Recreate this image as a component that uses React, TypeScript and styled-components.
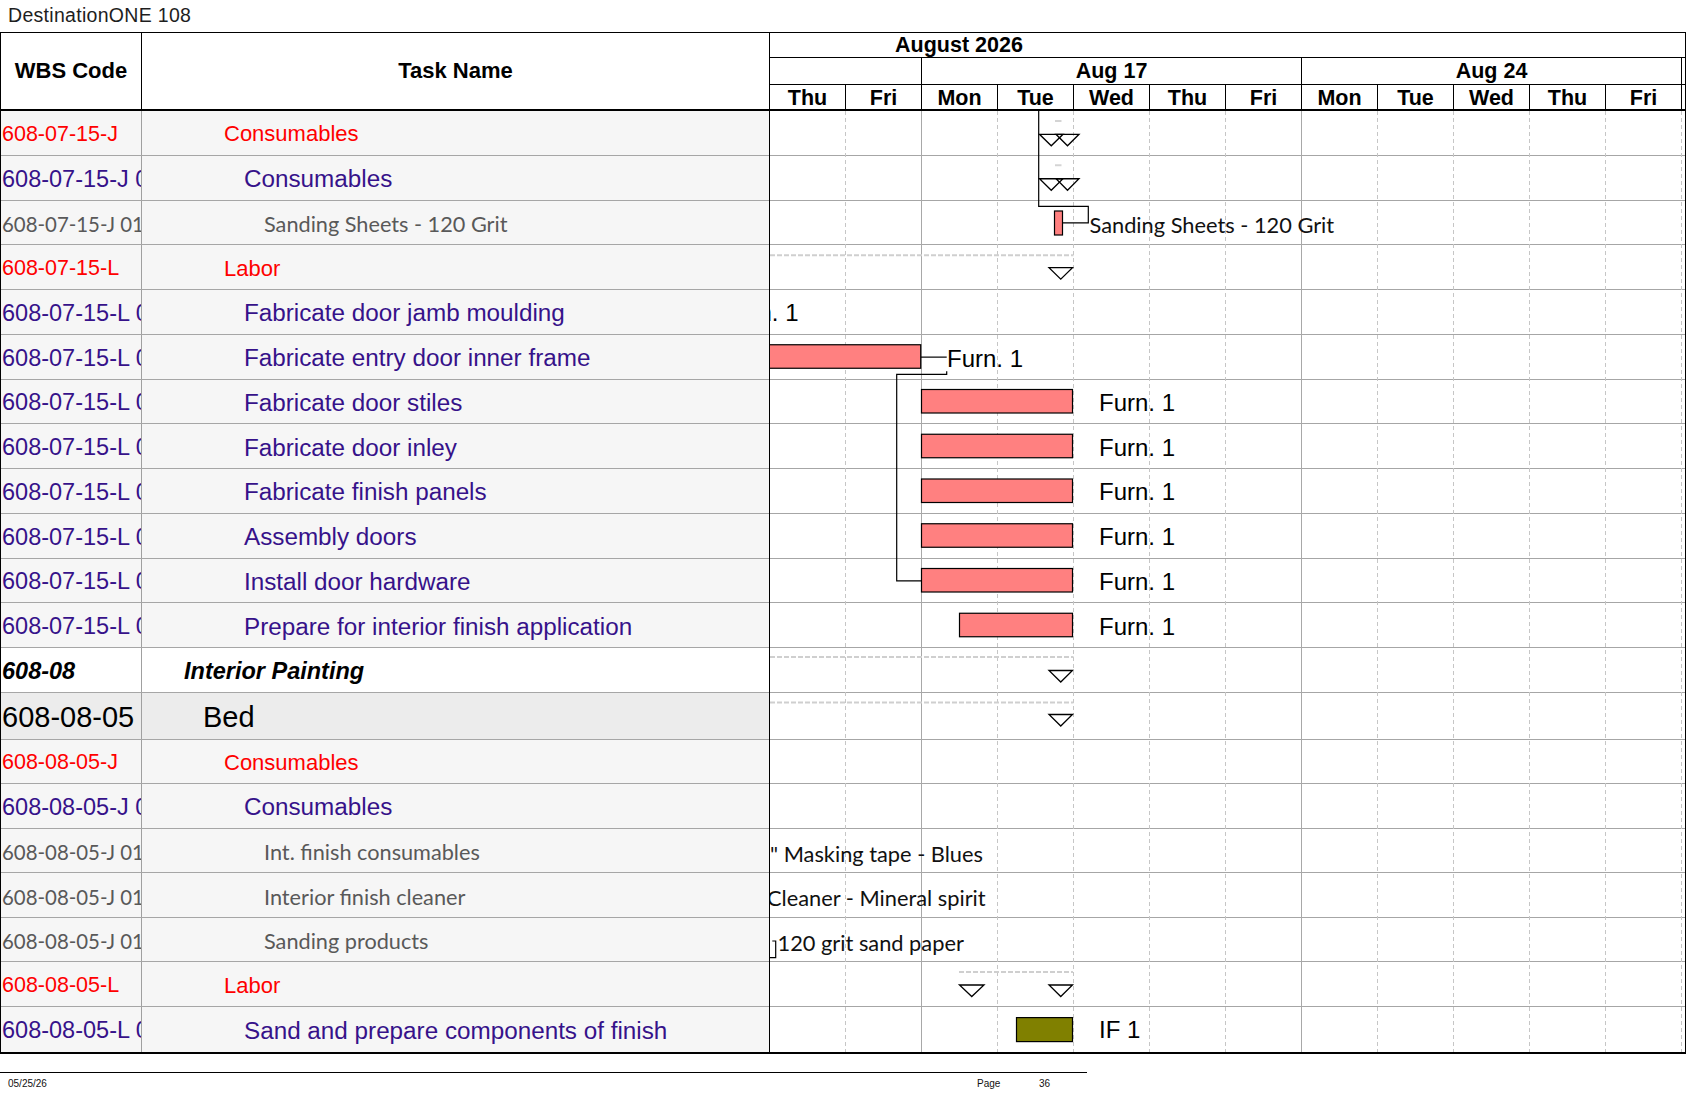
import styled, { createGlobalStyle } from "styled-components";

type Kind = "red" | "purple" | "gray" | "phase" | "bed";

interface Task {
  wbs: string;
  name: string;
  kind: Kind;
  height: number;
}

const tasks: Task[] = [
  { wbs: "608-07-15-J", name: "Consumables", kind: "red", height: 44.75 },
  { wbs: "608-07-15-J 01", name: "Consumables", kind: "purple", height: 44.75 },
  { wbs: "608-07-15-J 01.01", name: "Sanding Sheets - 120 Grit", kind: "gray", height: 44.75 },
  { wbs: "608-07-15-L", name: "Labor", kind: "red", height: 44.75 },
  { wbs: "608-07-15-L 01", name: "Fabricate door jamb moulding", kind: "purple", height: 44.75 },
  { wbs: "608-07-15-L 02", name: "Fabricate entry door inner frame", kind: "purple", height: 44.75 },
  { wbs: "608-07-15-L 03", name: "Fabricate door stiles", kind: "purple", height: 44.75 },
  { wbs: "608-07-15-L 04", name: "Fabricate door inley", kind: "purple", height: 44.75 },
  { wbs: "608-07-15-L 05", name: "Fabricate finish panels", kind: "purple", height: 44.75 },
  { wbs: "608-07-15-L 06", name: "Assembly doors", kind: "purple", height: 44.75 },
  { wbs: "608-07-15-L 07", name: "Install door hardware", kind: "purple", height: 44.75 },
  { wbs: "608-07-15-L 08", name: "Prepare for interior finish application", kind: "purple", height: 44.75 },
  { wbs: "608-08", name: "Interior Painting", kind: "phase", height: 44.5 },
  { wbs: "608-08-05", name: "Bed", kind: "bed", height: 47 },
  { wbs: "608-08-05-J", name: "Consumables", kind: "red", height: 44.6 },
  { wbs: "608-08-05-J 01", name: "Consumables", kind: "purple", height: 44.6 },
  { wbs: "608-08-05-J 01.01", name: "Int. finish consumables", kind: "gray", height: 44.6 },
  { wbs: "608-08-05-J 01.02", name: "Interior finish cleaner", kind: "gray", height: 44.6 },
  { wbs: "608-08-05-J 01.03", name: "Sanding products", kind: "gray", height: 44.6 },
  { wbs: "608-08-05-L", name: "Labor", kind: "red", height: 44.6 },
  { wbs: "608-08-05-L 01", name: "Sand and prepare components of finish", kind: "purple", height: 44.6 },
];

const kinds: Record<
  Kind,
  { family: string; size: number; wbsSize: number; color: string; weight: number; italic: boolean; indent: number; bg: string }
> = {
  red: { family: "sans", size: 22, wbsSize: 21.5, color: "#ff0000", weight: 400, italic: false, indent: 82, bg: "#f6f6f6" },
  purple: { family: "sans", size: 24.25, wbsSize: 23.5, color: "#36128a", weight: 400, italic: false, indent: 102, bg: "#f6f6f6" },
  gray: { family: "lato", size: 21.7, wbsSize: 20.4, color: "#595959", weight: 400, italic: false, indent: 122, bg: "#f6f6f6" },
  phase: { family: "sans", size: 23.5, wbsSize: 23.5, color: "#000000", weight: 700, italic: true, indent: 42, bg: "#ffffff" },
  bed: { family: "sans", size: 29, wbsSize: 29, color: "#000000", weight: 400, italic: false, indent: 61, bg: "#ececec" },
};

const DAY = 76;
const days = ["Thu", "Fri", "Mon", "Tue", "Wed", "Thu", "Fri", "Mon", "Tue", "Wed", "Thu", "Fri"];
const tops = tasks.reduce<number[]>((acc, t, i) => {
  acc.push(i === 0 ? 0 : acc[i - 1] + tasks[i - 1].height);
  return acc;
}, []);
const mid = (i: number) => tops[i] + tasks[i].height / 2;

const tri = (x: number, y: number, w = 23.5, h = 11.5) =>
  `${x},${y} ${x + w},${y} ${x + w / 2},${y + h}`;

export default function App() {
  return (
    <Page>
      <GlobalStyle />
      <TitleBar>DestinationONE 108</TitleBar>
      <Sheet>
        <HeaderRow>
          <HeadCell $w={141}>WBS Code</HeadCell>
          <HeadCell $w={628}>Task Name</HeadCell>
          <Timescale>
            <MonthTier>August 2026</MonthTier>
            <WeekTier>
              <WeekCell $w={2 * DAY} />
              <WeekCell $w={5 * DAY}>Aug 17</WeekCell>
              <WeekCell $w={5 * DAY}>Aug 24</WeekCell>
            </WeekTier>
            <DayTier>
              {days.map((d, i) => (
                <DayCell key={i}>{d}</DayCell>
              ))}
            </DayTier>
          </Timescale>
        </HeaderRow>

        <Body>
          <TaskTable>
            {tasks.map((t, i) => (
              <TaskRow key={i} $h={t.height}>
                <WbsCell $kind={t.kind}>{t.wbs}</WbsCell>
                <NameCell $kind={t.kind}>{t.name}</NameCell>
              </TaskRow>
            ))}
          </TaskTable>

          <ChartBody>
            {tasks.map((t, i) => (
              <ChartRow key={i} $h={t.height} />
            ))}
            <Gantt>
              {days.map((_, i) => {
                const x = (i + 1) * DAY - 0.5;
                const monday = i + 1 === 2 || i + 1 === 7;
                return (
                  <line
                    key={i}
                    x1={x}
                    x2={x}
                    y1={0}
                    y2={941}
                    stroke={monday ? "#a8a8a8" : "#c6c6c6"}
                    strokeDasharray={monday ? undefined : "4 3"}
                  />
                );
              })}

              {/* summary dashes */}
              <SummaryDash x1={0} x2={303.5} y1={tops[3] + 10} y2={tops[3] + 10} />
              <SummaryDash x1={0} x2={303.5} y1={tops[12] + 9} y2={tops[12] + 9} />
              <SummaryDash x1={0} x2={303.5} y1={tops[13] + 10} y2={tops[13] + 10} />
              <SummaryDash x1={189} x2={303} y1={tops[19] + 9.5} y2={tops[19] + 9.5} />
              <Tick x1={285} x2={291.5} y1={tops[0] + 10} y2={tops[0] + 10} />
              <Tick x1={285} x2={291.5} y1={tops[1] + 9.5} y2={tops[1] + 9.5} />

              {/* rollup triangles */}
              <Marker points={tri(269.5, tops[0] + 23.3)} />
              <Marker points={tri(286, tops[0] + 23.3, 23)} />
              <Marker points={tri(269.5, tops[1] + 23)} />
              <Marker points={tri(286, tops[1] + 23, 23)} />
              <Marker points={tri(279, tops[3] + 22.4)} />
              <Marker points={tri(279, tops[12] + 22.5)} />
              <Marker points={tri(279, tops[13] + 22)} />
              <Marker points={tri(189.5, tops[19] + 22.5, 24.5)} />
              <Marker points={tri(279, tops[19] + 22.5)} />

              {/* connectors */}
              <Link points={`268.7,0 268.7,${tops[2] + 5.8} 318.3,${tops[2] + 5.8} 318.3,${mid(2)} 292.5,${mid(2)}`} />
              <Link points={`150.7,${mid(5)} 176.7,${mid(5)}`} />
              <Link points={`176.7,${tops[5] + 36.5} 176.7,${tops[6] - 5.2} 126.7,${tops[6] - 5.2} 126.7,${mid(10)} 151.5,${mid(10)}`} />
              <Link points={`2.3,${tops[18] + 23.1} 5.7,${tops[18] + 23.1} 5.7,${tops[18] + 39.8} -1,${tops[18] + 39.8}`} />

              {/* bars */}
              <Bar x={-10} y={tops[5] + 10} width={160.7} height={23.5} />
              {[6, 7, 8, 9, 10].map((r) => (
                <Bar key={r} x={151.5} y={tops[r] + 10} width={151} height={23.5} />
              ))}
              <Bar x={189.5} y={tops[11] + 10} width={113} height={23.5} />
              <Bar x={284.5} y={tops[2] + 10.5} width={8} height={24} />
              <Bar x={246.5} y={tops[20] + 10.5} width={56} height={24} $fill="#808000" />

              {/* labels */}
              <BarLabel x={-47.5} y={mid(4) + 0.5}>Furn. 1</BarLabel>
              <BarLabel x={177} y={mid(5) + 1}>Furn. 1</BarLabel>
              {[6, 7, 8, 9, 10, 11].map((r) => (
                <BarLabel key={r} x={329} y={mid(r) + 0.5}>
                  Furn. 1
                </BarLabel>
              ))}
              <BarLabel x={329} y={mid(20) + 0.5}>IF 1</BarLabel>
              <ItemLabel x={319.5} y={mid(2) + 2}>Sanding Sheets - 120 Grit</ItemLabel>
              <ItemLabel x={0} y={mid(16) + 2}>" Masking tape - Blues</ItemLabel>
              <ItemLabel x={-3} y={mid(17) + 2}>Cleaner - Mineral spirit</ItemLabel>
              <ItemLabel x={7.5} y={mid(18) + 2}>120 grit sand paper</ItemLabel>
            </Gantt>
          </ChartBody>
        </Body>
      </Sheet>

      <Footer>
        <FootText $pad={8}>05/25/26</FootText>
        <FootText>Page</FootText>
        <FootText>36</FootText>
      </Footer>
    </Page>
  );
}

const GlobalStyle = createGlobalStyle`
  html, body {
    margin: 0;
    padding: 0;
    background: #ffffff;
  }
  body {
    font-family: "Liberation Sans", Arial, sans-serif;
    color: #000;
  }
  * {
    box-sizing: border-box;
  }
`;

const Page = styled.div`
  width: 1687px;
  height: 1097px;
  overflow: hidden;
  background: #fff;
`;

const TitleBar = styled.div`
  height: 31.5px;
  padding-left: 8px;
  font-family: "Liberation Sans", Arial, sans-serif;
  font-size: 19.5px;
  line-height: 31px;
  letter-spacing: 0.3px;
  color: #1e1e1e;
`;

const Sheet = styled.div`
  width: 1686px;
  border: 1px solid #000;
  border-bottom-width: 2px;
`;

const HeaderRow = styled.div`
  display: flex;
  height: 78.5px;
  border-bottom: 2px solid #000;
`;

const HeadCell = styled.div<{ $w: number }>`
  width: ${({ $w }) => $w}px;
  flex: none;
  display: flex;
  align-items: center;
  justify-content: center;
  padding-top: 1px;
  border-right: 1px solid #000;
  font-weight: 700;
  font-size: 22px;
`;

const Timescale = styled.div`
  flex: 1;
  display: flex;
  flex-direction: column;
  font-weight: 700;
  font-size: 21.5px;
`;

const MonthTier = styled.div`
  height: 25.5px;
  padding-left: 125px;
  line-height: 24px;
  border-bottom: 1px solid #000;
`;

const WeekTier = styled.div`
  display: flex;
  height: 27px;
  border-bottom: 1px solid #000;
`;

const WeekCell = styled.div<{ $w: number }>`
  width: ${({ $w }) => $w}px;
  flex: none;
  display: flex;
  align-items: center;
  justify-content: center;
  padding-top: 1px;
  border-right: 1px solid #000;
`;

const DayTier = styled.div`
  display: flex;
  flex: 1;
`;

const DayCell = styled.div`
  width: ${DAY}px;
  flex: none;
  display: flex;
  align-items: center;
  justify-content: center;
  padding-top: 1px;
  border-right: 1px solid #000;
`;

const Body = styled.div`
  display: flex;
`;

const TaskTable = styled.div`
  width: 769px;
  flex: none;
  border-right: 1px solid #000;
`;

const TaskRow = styled.div<{ $h: number }>`
  display: grid;
  grid-template-columns: 141px 1fr;
  height: ${({ $h }) => $h}px;
  border-bottom: 1px solid #a6a6a6;

  &:last-child {
    border-bottom: none;
  }
`;

const Cell = styled.div<{ $kind: Kind }>`
  display: flex;
  align-items: center;
  padding-top: 3px;
  overflow: hidden;
  white-space: nowrap;
  background: ${({ $kind }) => kinds[$kind].bg};
  color: ${({ $kind }) => kinds[$kind].color};
  font-family: ${({ $kind }) =>
    kinds[$kind].family === "lato" ? `Lato, "Open Sans", sans-serif` : `"Liberation Sans", Arial, sans-serif`};
  font-weight: ${({ $kind }) => kinds[$kind].weight};
  font-style: ${({ $kind }) => (kinds[$kind].italic ? "italic" : "normal")};
`;

const WbsCell = styled(Cell)`
  padding-left: 1px;
  border-right: 1px solid #a0a0a0;
  font-size: ${({ $kind }) => kinds[$kind].wbsSize}px;
`;

const NameCell = styled(Cell)`
  padding-left: ${({ $kind }) => kinds[$kind].indent}px;
  font-size: ${({ $kind }) => kinds[$kind].size}px;
`;

const ChartBody = styled.div`
  position: relative;
  flex: 1;
`;

const ChartRow = styled.div<{ $h: number }>`
  height: ${({ $h }) => $h}px;
  border-bottom: 1px solid #a6a6a6;

  &:last-of-type {
    border-bottom: none;
  }
`;

const Gantt = styled.svg`
  position: absolute;
  inset: 0;
  width: 100%;
  height: 100%;
  overflow: hidden;
`;

const SummaryDash = styled.line`
  stroke: #cfcfcf;
  stroke-width: 2;
  stroke-dasharray: 5 2;
`;

const Tick = styled.line`
  stroke: #d4d4d4;
  stroke-width: 2;
`;

const Marker = styled.polygon`
  fill: none;
  stroke: #000;
  stroke-width: 1.3;
`;

const Link = styled.polyline`
  fill: none;
  stroke: #000;
  stroke-width: 1.2;
`;

const Bar = styled.rect<{ $fill?: string }>`
  fill: ${({ $fill }) => $fill ?? "#ff8080"};
  stroke: #000;
  stroke-width: 1.2;
`;

const BarLabel = styled.text`
  font-family: "Liberation Sans", Arial, sans-serif;
  font-size: 24px;
  fill: #000;
  dominant-baseline: central;
`;

const ItemLabel = styled.text`
  font-family: Lato, "Open Sans", sans-serif;
  font-size: 21.8px;
  fill: #111;
  dominant-baseline: central;
`;

const Footer = styled.div`
  width: 1087px;
  margin-top: 18.5px;
  border-top: 1px solid #000;
  display: grid;
  grid-template-columns: 977px 62px auto;
  padding-top: 5px;
  font-size: 10px;
  line-height: 12px;
  color: #111;
`;

const FootText = styled.div<{ $pad?: number }>`
  padding-left: ${({ $pad }) => $pad ?? 0}px;
`;
